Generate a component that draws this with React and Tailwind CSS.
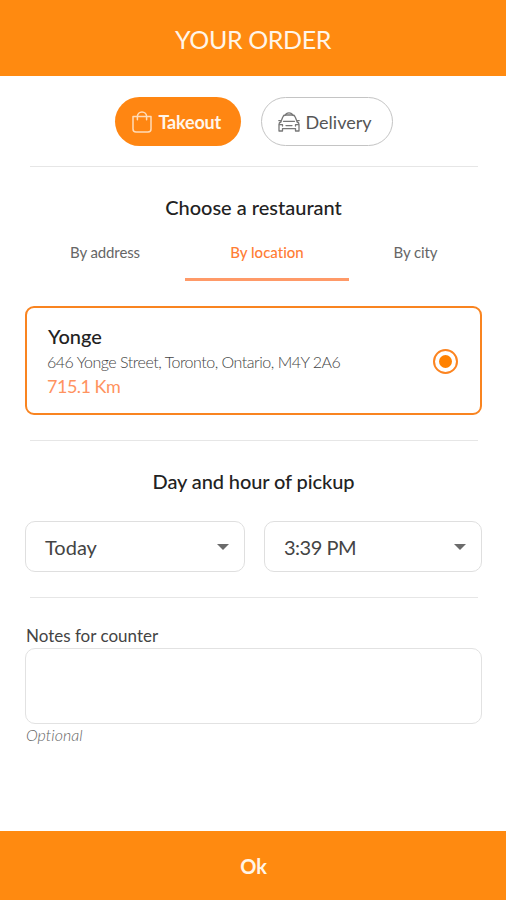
import { useState } from "react";

const TABS = [
  { label: "By address", width: "w-[160px]" },
  { label: "By location", width: "w-[164px]" },
  { label: "By city", width: "w-[133px]" },
];

function BagIcon() {
  return (
    <svg width="20" height="22" viewBox="0 0 20 22" fill="none" stroke="#ffdcb8" strokeWidth="1.5">
      <path d="M1 5.400h18v12.600a3 3 0 0 1-3 3h-12a3 3 0 0 1-3-3z" strokeLinejoin="round" />
      <path d="M5.400 8.800V5.500a4.600 4.600 0 0 1 9.200 0v3.300" strokeLinecap="round" />
    </svg>
  );
}

function TaxiIcon() {
  return (
    <svg width="22" height="20" viewBox="0 0 22 20" fill="none" stroke="#777" strokeWidth="1.3" strokeLinejoin="round" strokeLinecap="round">
      <path d="M7.500 3Q8 .8 11 .8T14.500 3" />
      <path d="M2.800 10 4.800 5Q5.500 3 7.500 3h7q2 0 2.700 2l2 5" />
      <path d="M5.500 9.300h11" />
      <path d="M2.800 10Q1 10.500 1 12.400V19h3.500v-2.400h13V19H21v-6.600q0-1.900-1.800-2.400" />
      <path d="M.8 8.600h1.800M21.200 8.600h-1.800" />
      <path d="M1.500 12.700h3v1.400M20.500 12.700h-3v1.400M8 13.600h6" />
    </svg>
  );
}

function Divider() {
  return <hr className="ml-[30px] mr-[28px] border-0 h-px bg-[#e6e6e6]" />;
}

function Select({ value, className, textClass }) {
  return (
    <button
      className={`${className} h-[51px] flex items-center justify-between rounded-[10px] border border-[#dfdfdf] pl-[19px] pr-[15px] text-[20px] text-[#444]`}
    >
      <span className={textClass}>{value}</span>
      <svg width="12" height="6" viewBox="0 0 12 6" fill="#6b6b6b">
        <path d="M0 0h12L6 6z" />
      </svg>
    </button>
  );
}

export default function App() {
  const [tab, setTab] = useState("By location");
  const [mode, setMode] = useState("takeout");

  return (
    <div className="w-[506px] h-[900px] flex flex-col bg-white font-['Lato',sans-serif] [font-variant-ligatures:none] overflow-hidden">
      {/* HEADER */}
      <header className="h-[76px] shrink-0 bg-[#ff8a10] flex items-center justify-center pt-[3px]">
        <h1 className="text-[25px] tracking-[-0.4px] text-[#fff5e8]">YOUR ORDER</h1>
      </header>

      <main className="flex-1 flex flex-col">
        {/* ORDER TYPE */}
        <div className="flex justify-center gap-5 pt-[21px] pb-5">
          <button
            onClick={() => setMode("takeout")}
            aria-pressed={mode === "takeout"}
            className="w-[126px] h-[49px] ml-px rounded-full bg-[#ff8612] flex items-center pl-[17px] gap-[7px] text-[18px] tracking-[-0.2px] font-bold text-[#fff5ea]"
          >
            <BagIcon />
            <span className="pt-[2px]">Takeout</span>
          </button>
          <button
            onClick={() => setMode("delivery")}
            aria-pressed={mode === "delivery"}
            className="w-[132px] h-[49px] rounded-full border border-[#c4c4c4] flex items-center pl-[16px] gap-[6px] text-[18px] text-[#555]"
          >
            <TaxiIcon />
            <span className="pt-[2px]">Delivery</span>
          </button>
        </div>

        <Divider />

        {/* RESTAURANT */}
        <h2 className="mt-[26px] h-[28px] leading-[28px] pl-px text-center text-[20px] font-medium text-[#222]">
          Choose a restaurant
        </h2>

        <div className="flex pl-[25px] pr-[24px] mt-[16px]">
          {TABS.map((t) => (
            <button
              key={t.label}
              onClick={() => setTab(t.label)}
              className={`${t.width} h-[44px] pb-[11px] text-[15px] border-b-[3px] ${
                tab === t.label
                  ? "text-[#ff7d35] border-[#ff9a68] font-medium"
                  : "text-[#666] border-transparent tracking-[-0.1px]"
              }`}
            >
              {t.label}
            </button>
          ))}
        </div>

        <div className="ml-[25px] mr-[24px] mt-[25px] mb-[25px] h-[109px] shrink-0 rounded-[9px] border-2 border-[#f98420] flex items-center justify-between pl-[20px] pr-[22px]">
          <div>
            <div className="text-[20px] leading-[26px] pl-px font-medium text-[#222]">Yonge</div>
            <div className="text-[16px] leading-[25px] tracking-[-0.48px] font-light text-[#444]">
              646 Yonge Street, Toronto, Ontario, M4Y 2A6
            </div>
            <div className="text-[18px] leading-[25px] tracking-[-0.5px] text-[#ff935f]">715.1 Km</div>
          </div>
          <span className="w-[25px] h-[25px] mt-px rounded-full border-2 border-[#fc8420] flex items-center justify-center">
            <span className="w-[13px] h-[13px] rounded-full bg-[#ff8100]" />
          </span>
        </div>

        <Divider />

        {/* PICKUP TIME */}
        <h2 className="mt-[26px] h-[28px] leading-[28px] pl-px text-center text-[20px] tracking-[-0.1px] font-medium text-[#222]">
          Day and hour of pickup
        </h2>

        <div className="flex gap-[19px] px-[25px] mt-[26px] mb-[25px]">
          <Select value="Today" className="w-[220px] shrink-0" />
          <Select value="3:39 PM" className="w-[218px] shrink-0" textClass="tracking-[-0.5px]" />
        </div>

        <Divider />

        {/* NOTES */}
        <div className="pl-[25px] pr-[24px] pt-[26px] flex flex-col">
          <label htmlFor="notes" className="h-[24px] leading-[24px] pl-px text-[17px] text-[#444]">
            Notes for counter
          </label>
          <textarea
            id="notes"
            className="h-[76px] resize-none rounded-[10px] border border-[#e2e2e2] outline-none"
          />
          <span className="h-[22px] leading-[22px] pl-px text-[16px] italic font-light text-[#666]">
            Optional
          </span>
        </div>
      </main>

      {/* FOOTER */}
      <button className="h-[69px] shrink-0 bg-[#ff8a10] pl-px text-[20px] font-bold text-[#fff5e8]">
        Ok
      </button>
    </div>
  );
}
